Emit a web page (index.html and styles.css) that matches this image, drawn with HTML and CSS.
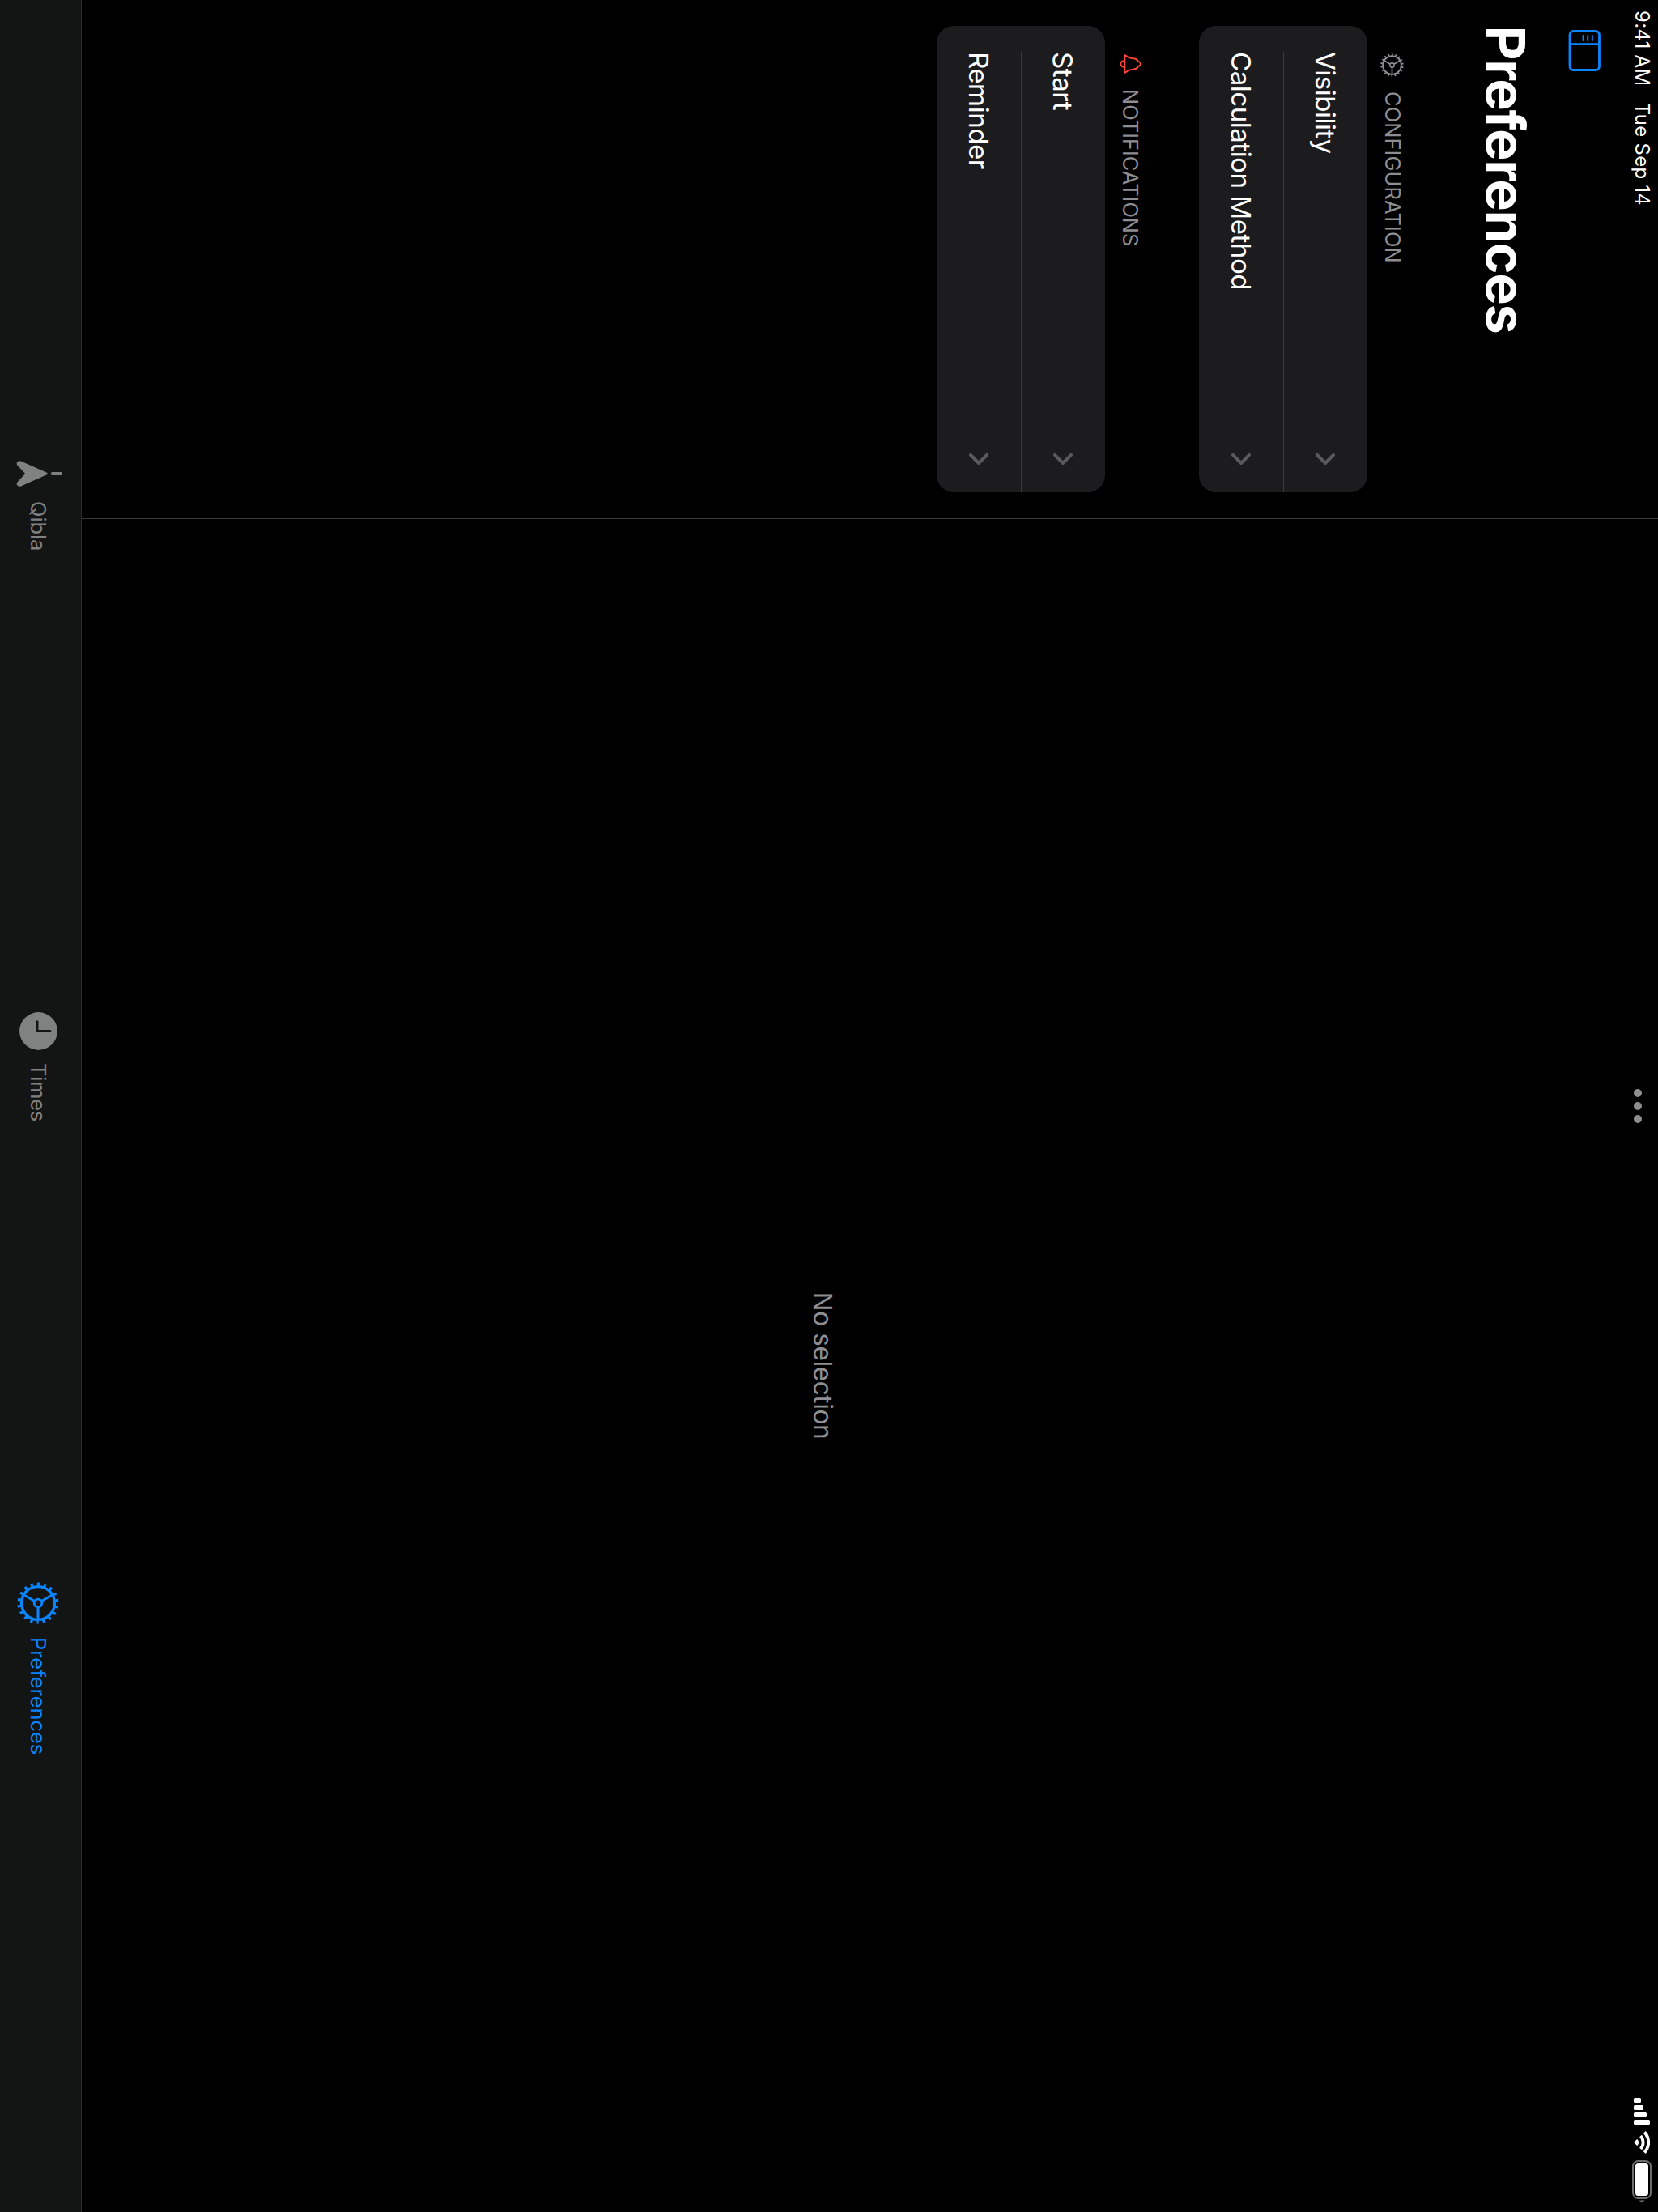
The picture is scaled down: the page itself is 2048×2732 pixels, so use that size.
FILE: index.html
```html
<!DOCTYPE html>
<html lang="en">
<head>
<meta charset="utf-8">
<title>Preferences</title>
<link rel="stylesheet" href="styles.css">
</head>
<body>
<div class="screen">
  <div class="main">
    <aside class="sidebar">
      <div class="status-left"><span>9:41 AM</span><span>Tue Sep 14</span></div>
      <div class="toolbar">
        <svg class="sidebar-icon" viewBox="0 0 51 40" fill="none" stroke="#0a84ff">
          <rect x="1.5" y="1.5" width="48" height="36.5" rx="4.5" stroke-width="2.8"/>
          <path d="M17.5 2v36" stroke-width="2.6"/>
          <path d="M7 10.2h6M7 15.8h6M7 21.4h6" stroke-width="2" stroke-linecap="round"/>
        </svg>
      </div>
      <h1 class="title">Preferences</h1>
      <section>
        <h2 class="heading config">
          <svg class="head-gear" viewBox="-26 -26 52 52"><use href="#gear"/></svg>
          <span>CONFIGURATION</span>
        </h2>
        <div class="card">
          <div class="row"><span>Visibility</span><svg class="chevron" viewBox="0 0 14 24"><path d="M2 2L12 12L2 22"/></svg></div>
          <div class="row"><span>Calculation Method</span><svg class="chevron" viewBox="0 0 14 24"><path d="M2 2L12 12L2 22"/></svg></div>
        </div>
      </section>
      <section>
        <h2 class="heading notif">
          <svg class="head-bell" viewBox="0 0 24 27" fill="none" stroke="#ff453a" stroke-width="1.9" stroke-linejoin="round">
            <path d="M1.3 20.6C1.3 18.6 4.2 17.6 4.6 14C5 9 5.4 5.4 9 3.8C10 1.6 10.8 1 12 1C13.2 1 14 1.6 15 3.8C18.6 5.4 19 9 19.4 14C19.8 17.6 22.7 18.6 22.7 20.6Z"/>
            <path d="M8.2 20.8C8.2 27.2 15.8 27.2 15.8 20.8"/>
          </svg>
          <span>NOTIFICATIONS</span>
        </h2>
        <div class="card">
          <div class="row"><span>Start</span><svg class="chevron" viewBox="0 0 14 24"><path d="M2 2L12 12L2 22"/></svg></div>
          <div class="row"><span>Reminder</span><svg class="chevron" viewBox="0 0 14 24"><path d="M2 2L12 12L2 22"/></svg></div>
        </div>
      </section>
    </aside>
    <main class="detail">
      <div class="status-right">
        <svg class="dots" viewBox="0 0 42 10" fill="#8e8e8e"><circle cx="5" cy="5" r="5"/><circle cx="21" cy="5" r="5"/><circle cx="37" cy="5" r="5"/></svg>
        <svg class="signal" viewBox="0 0 33 20" fill="#fff"><rect y="11" width="6" height="9" rx="1.5"/><rect x="9" y="8" width="6" height="12" rx="1.5"/><rect x="18" y="4" width="6" height="16" rx="1.5"/><rect x="27" width="6" height="20" rx="1.5"/></svg>
        <svg class="wifi" viewBox="0 0 28 20" fill="none" stroke="#fff" stroke-width="3.8">
          <path d="M1.4 6.7A18.6 18.6 0 0 1 26.6 6.7"/><path d="M6 11.5A11.8 11.8 0 0 1 22 11.5"/>
          <path d="M13.2 19.2L10.2 16.2Q9.8 15.6 10.4 15.2A6 6 0 0 1 17.6 15.2Q18.2 15.6 17.8 16.2L14.8 19.2Q14 19.9 13.2 19.2Z" fill="#fff" stroke="none"/>
        </svg>
        <svg class="battery" viewBox="0 0 54 24"><rect x="1" y="1" width="46" height="22" rx="6.5" fill="none" stroke="#6e6e6e" stroke-width="2"/><rect x="4" y="4" width="40" height="16" rx="3.5" fill="#fff"/><path d="M49.5 8C53 9.5 53 14.5 49.5 16Z" fill="#6e6e6e"/></svg>
      </div>
      <p class="empty">No selection</p>
    </main>
  </div>
  <nav class="tabs">
    <a class="tab qibla">
      <svg class="i-qibla" viewBox="0 0 32 57"><path d="M14.2 20.2Q16 15.6 17.8 20.2L31.4 51.2Q32.4 54.6 29.8 56Q28 57 26 55.2L16 45.8L6 55.2Q4 57 2.2 56Q-.4 54.6.6 51.2Z"/><rect x="14.1" y="0" width="3.8" height="14.2" rx="1.9"/></svg>
      <span>Qibla</span>
    </a>
    <a class="tab times">
      <svg class="i-clock" viewBox="0 0 47 47"><circle cx="23.5" cy="23.5" r="23.4"/><path d="M23.5 9V25H11.8" fill="none" stroke="#131514" stroke-width="3" stroke-linecap="round" stroke-linejoin="round"/></svg>
      <span>Times</span>
    </a>
    <a class="tab prefs">
      <svg class="i-gear" viewBox="-26 -26 52 52">
        <defs><g id="gear" fill="none" stroke="currentColor">
          <circle r="20.4" stroke-width="3.4"/>
          <circle r="23.4" stroke-width="4.2" stroke-dasharray="3.2 4.968" stroke-dashoffset="1.6"/>
          <circle r="4.8" stroke-width="2.8"/>
          <path d="M5.5 0H20M-2.75 -4.76L-10 -17.3M-2.75 4.76L-10 17.3" stroke-width="3"/>
        </g></defs>
        <use href="#gear"/>
      </svg>
      <span>Preferences</span>
    </a>
  </nav>
</div>
</body>
</html>
```
FILE: styles.css
```css
* { box-sizing: border-box; margin: 0; padding: 0; }
html { background: #000; }
body { width: 2048px; height: 2732px; overflow: hidden; background: #000; color: #fff; font-family: Inter, sans-serif; }
svg { display: block; flex: none; }
/* Landscape interface turned a quarter clockwise */
.screen { width: 2732px; height: 2048px; display: flex; flex-direction: column; transform: translateX(2048px) rotate(90deg); transform-origin: 0 0; white-space: nowrap; }
.main { flex: 1; display: flex; min-height: 0; }
.sidebar { flex: none; width: 641px; padding: 0 32px; border-right: 1px solid #3a3a3c; }
.status-left { display: flex; height: 40px; margin-left: -19px; font-size: 24px; line-height: 40px; gap: 20.5px; letter-spacing: .25px; }
.toolbar { height: 108px; padding: 31px 0 0 5px; }
.sidebar-icon { width: 51px; height: 40px; }
.title { height: 80px; margin-left: -.5px; font-size: 66.5px; line-height: 80px; font-weight: 700; letter-spacing: -1.4px; }
.heading { display: flex; align-items: center; color: #8e8e93; font-size: 25.4px; font-weight: 400; line-height: 32px; }
.config { height: 131px; padding: 80px 0 11px 34px; letter-spacing: .12px; }
.notif { height: 116px; padding: 68px 0 14px 35px; }
.head-gear { width: 29px; height: 29px; margin-right: 18px; }
.head-bell { width: 24px; height: 27px; margin: 0 19px 2px 0; }
.card { height: 208px; background: #1c1c1e; border-radius: 21px; padding-left: 32px; }
.row { height: 104px; display: flex; align-items: center; justify-content: space-between; padding-right: 34px; font-size: 33.2px; letter-spacing: -.55px; }
.row:first-child { border-bottom: 1px solid #3a3a3c; }
.chevron { width: 14px; height: 24px; fill: none; stroke: #5a5a5e; stroke-width: 4; stroke-linecap: round; stroke-linejoin: round; }
.detail { flex: 1; display: flex; flex-direction: column; }
.status-right { height: 50px; display: flex; padding: 10px 10px 0 704px; }
.dots { width: 42px; height: 10px; margin: 10px auto 0 0; }
.signal { width: 33px; height: 20px; margin-right: 8px; }
.wifi { width: 28px; height: 20px; margin-right: 8px; }
.battery { width: 54px; height: 24px; margin-top: -2px; }
.empty { flex: 1; padding-top: 962px; text-align: center; color: #8e8e93; font-size: 31.6px; letter-spacing: -.42px; }
.tabs { height: 101px; display: flex; padding-top: 5px; border-top: 1px solid #2c2e2d; background: #131514; color: #808281; font-size: 25.4px; }
.tab { display: flex; align-items: center; fill: currentColor; }
.qibla { margin-left: 569px; width: 681px; }
.times { width: 704px; letter-spacing: -.2px; }
.prefs { color: #0a84ff; }
.i-qibla { width: 32px; height: 57px; margin: 0 18px 3px 0; }
.i-clock { width: 47px; height: 47px; margin-right: 16px; }
.i-gear { width: 52px; height: 52px; margin-right: 16px; }
```
